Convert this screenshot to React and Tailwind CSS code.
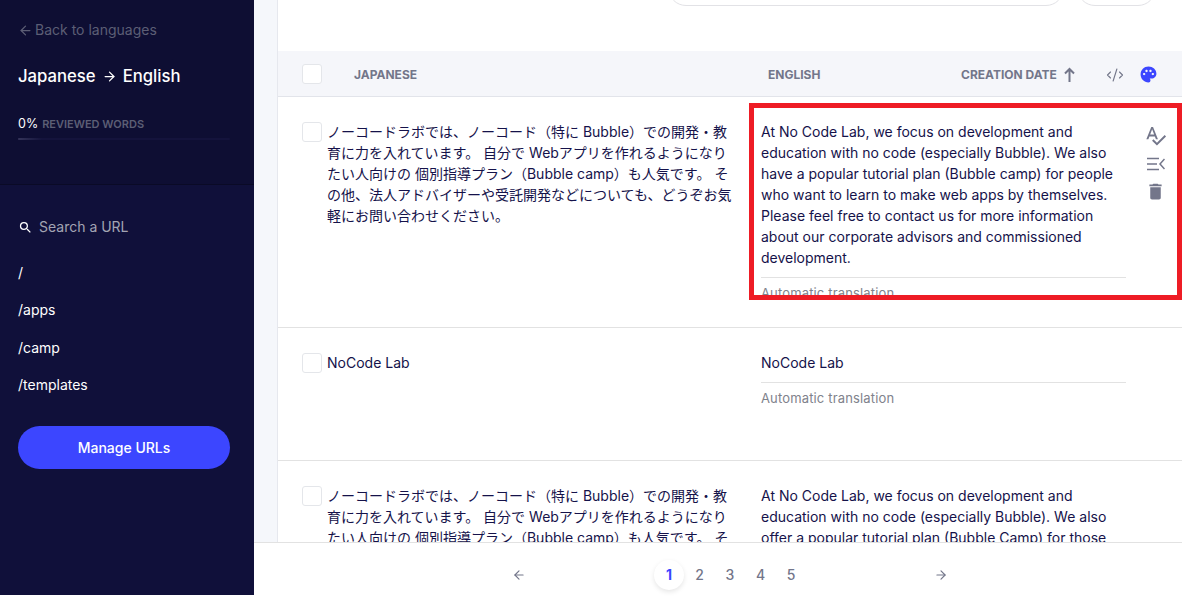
import { ArrowLeft, ArrowRight, CodeXml } from 'lucide-react';
import { MdDelete, MdPalette, MdSearch, MdSpellcheck } from 'react-icons/md';

const jp = 'ノーコードラボでは、ノーコード（特に Bubble）での開発・教育に力を入れています。 自分で Webアプリを作れるようになりたい人向けの 個別指導プラン（Bubble camp）も人気です。 その他、法人アドバイザーや受託開発などについても、どうぞお気軽にお問い合わせください。';

function Check() {
  return <div className="w-5 h-5 shrink-0 rounded-[3px] border border-[#e4e6ea] bg-white" />;
}

function Note() {
  return (
    <div className="mt-[9px] border-t border-[#e2e2e2] pt-[5px] text-[13px] leading-[20px] tracking-[0.15px] text-[#80828c]">Automatic translation</div>
  );
}

function WrapIcon() {
  return (
    <svg width="18" height="14" viewBox="0 0 18 14" fill="none" stroke="#73768a" strokeWidth="1.5">
      <path d="M0 1.5h12M0 7h10M0 12.5h12M17.5 2L13 7l4.5 5" />
    </svg>
  );
}

function SortArrow() {
  return (
    <svg width="11" height="15" viewBox="0 0 11 15" fill="none" stroke="#73768a" strokeWidth="2" className="ml-[7px] mt-[2px] shrink-0">
      <path d="M5.5 15V2M1 6.5l4.5-4.5L10 6.5" />
    </svg>
  );
}

export default function App() {
  return (
    <div className="flex h-[600px] w-[1182px] overflow-hidden bg-white text-[14px] leading-[21px] text-[#15124a] font-['Inter','Noto_Sans_CJK_JP',sans-serif]">
      <aside className="flex h-[595px] w-[254px] shrink-0 flex-col bg-[#0e0e33]">
        <div className="h-[185px] shrink-0 border-b border-[#0a0a26] px-[18px] pt-[20px]">
          <div className="flex items-center gap-[2px] text-[14px] leading-[20px] text-[#5c5e75]">
            <ArrowLeft size={15} /> Back to languages
          </div>
          <div className="mt-[26px] flex items-center gap-[6px] text-[16.7px] font-medium leading-[20px] text-white">
            Japanese <ArrowRight size={15} /> English
          </div>
          <div className="mt-[30px] flex items-center gap-[4px] text-[12.5px] leading-[16px] text-white">
            0% <span className="text-[11px] font-semibold text-[#5c5e75]">REVIEWED WORDS</span>
          </div>
          <div className="mt-[6px] h-[2px] w-[212px] rounded bg-[#14133c]">
            <div className="h-full w-[24px] rounded bg-gradient-to-r from-[#35345a] to-[#14133c]" />
          </div>
        </div>
        <div className="flex-1 bg-[#10103a] px-[18px]">
          <div className="mt-[32px] flex items-center gap-[6px] text-[14px] leading-[20px] text-[#a3a4b3]">
            <MdSearch size={15} className="text-white" /> Search a URL
          </div>
          <div className="mt-[26px] flex flex-col gap-[17.3px] text-[14px] leading-[20px] text-white">
            <div>/</div>
            <div>/apps</div>
            <div>/camp</div>
            <div>/templates</div>
          </div>
          <div className="mt-[31px] flex h-[43px] w-[212px] items-center justify-center rounded-full bg-[#3c46ff] text-[14px] font-medium text-white">Manage URLs</div>
        </div>
      </aside>

      <div className="flex min-w-0 flex-1 flex-col">
        <div className="flex min-h-0 flex-1">
          <div className="w-[24px] shrink-0 border-r border-[#e6e8ee] bg-[#f5f7fb]" />

          <main className="flex min-w-0 flex-1 flex-col">
            <div className="h-[51px] shrink-0 overflow-hidden">
              <div className="flex justify-end gap-[13px] pr-[26px]">
                <div className="-mt-[30px] h-[36px] w-[396px] rounded-full border border-[#e2e2e6]" />
                <div className="-mt-[30px] h-[36px] w-[79px] rounded-full border border-[#e2e2e6]" />
              </div>
            </div>
            <div className="flex h-[46px] shrink-0 items-center border-b border-[#e2e4ea] bg-[#f5f6fa] pl-[24px] text-[12px] font-bold text-[#73768a]">
              <Check />
              <div className="ml-[32px] w-[414px] pt-[2px]">JAPANESE</div>
              <div className="w-[193px] pt-[2px]">ENGLISH</div>
              <div className="pt-[2px]">CREATION DATE</div>
              <SortArrow />
              <CodeXml size={18} strokeWidth={1.5} className="ml-[31px] mt-[2px]" />
              <MdPalette size={19} className="ml-[15px] mt-[2px] text-[#3c46ff]" />
            </div>
            <div className="min-h-0 flex-1 overflow-hidden">
              <div className="flex h-[231px] border-b border-[#e2e2e2]">
                <div className="flex w-[471px] shrink-0 gap-[5px] pl-[24px] pt-[25px]">
                  <Check />
                  <div className="w-[408px] -mt-[1px]">{jp}</div>
                </div>
                <div className="mt-[6px] flex h-[197px] flex-1 overflow-hidden border-[5px] border-[#ee1c25] pl-[7px] pt-[13px]">
                  <div className="w-[365px] shrink-0">
                    At No Code Lab, we focus on development and education with no code (especially Bubble). We also have a popular tutorial plan (Bubble camp) for people who want to learn to make web apps by themselves. Please feel free to contact us for more information about our corporate advisors and commissioned development.
                    <Note />
                  </div>
                  <div className="ml-[18px] flex flex-col items-center gap-[10px] pt-[3px] text-[#73768a]">
                    <MdSpellcheck size={23} />
                    <WrapIcon />
                    <MdDelete size={21} />
                  </div>
                </div>
              </div>
              <div className="flex h-[133px] border-b border-[#e2e2e2]">
                <div className="flex w-[471px] shrink-0 gap-[5px] pl-[24px] pt-[25px]">
                  <Check />
                  <div className="-mt-[1px]">NoCode Lab</div>
                </div>
                <div className="w-[365px] ml-[12px] pt-[24px]">
                  NoCode Lab
                  <Note />
                </div>
              </div>
              <div className="flex">
                <div className="flex w-[471px] shrink-0 gap-[5px] pl-[24px] pt-[25px]">
                  <Check />
                  <div className="w-[408px] -mt-[1px]">{jp}</div>
                </div>
                <div className="w-[365px] ml-[12px] pt-[24px]">
                  At No Code Lab, we focus on development and education with no code (especially Bubble). We also offer a popular tutorial plan (Bubble Camp) for those
                </div>
              </div>
            </div>
          </main>
        </div>

        <div className="flex h-[58px] shrink-0 items-center justify-center border-t border-[#e2e2e2] bg-white pl-[24px] pt-[6px] text-[14px] font-medium text-[#73768a]">
          <div className="flex w-[436px] items-center justify-between">
            <ArrowLeft size={14} />
            <div className="flex items-center">
              <div className="flex h-[30px] w-[30.5px] items-center justify-center rounded-full bg-white font-bold text-[#3c46ff] shadow-[0_2px_5px_rgba(0,0,0,0.1)]">1</div>
              <div className="w-[30.5px] text-center">2</div>
              <div className="w-[30.5px] text-center">3</div>
              <div className="w-[30.5px] text-center">4</div>
              <div className="w-[30.5px] text-center">5</div>
            </div>
            <ArrowRight size={14} />
          </div>
        </div>
      </div>
    </div>
  );
}
